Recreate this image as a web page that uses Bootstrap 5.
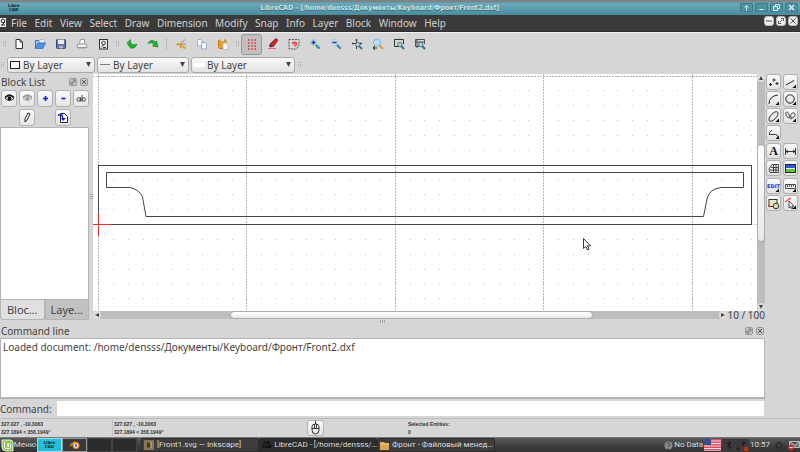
<!DOCTYPE html>
<html lang="en">
<head>
<meta charset="utf-8">
<meta name="viewport" content="width=device-width, initial-scale=1">
<title>LibreCAD - [/home/densss/Документы/Keyboard/Фронт/Front2.dxf]</title>
<link href="https://cdn.jsdelivr.net/npm/bootstrap@5.3.0/dist/css/bootstrap.min.css" rel="stylesheet">
<style>
  body { background: #d6d6d6; color: #444; font: 10px/14px "Noto Sans", "Open Sans", sans-serif; }
  svg { display: block; flex: none; }
  button { padding: 0; border: 0; background: none; color: inherit; font: inherit; display: flex; align-items: center; justify-content: center; flex: none; }
  .titlebar { height: 15px; padding-right: 2px; background: linear-gradient(#7b8589 0 2px, #68a9b9 3px, #5a9dae 60%, #478b9d); }
  .titlebar h1 { font: bold 7px/16px "DejaVu Sans Condensed", "DejaVu Sans", sans-serif; color: #d3e4e8; text-shadow: 0 1px 0 #2c6573; margin: 0; }
  .win-group { gap: 2px; }
  .winbtn { width: 13px; height: 9px; background: #4d91a2; border: 1px solid #3b7b8b; border-radius: 1px; color: #e4f0f3; }
  .menubar { height: 17px; background: #3a3a3a; border-bottom: 1px solid #2e2e2e; }
  .menubar a { color: #d0d0d0; text-decoration: none; line-height: 16px; }
  .menus { width: 435px; }
  .mdi-group { gap: 2px; padding: 1px 2px 0 0; }
  .mdibtn { width: 10px; height: 10px; background: #eee; border: 1px solid #bbb; border-radius: 3px; color: #555; }
  .tools { height: 23px; border-top: 1px solid #f2f2f2; }
  .tool { width: 21px; height: 21px; border-radius: 3px; }
  .tool.pressed { background: #c0c0c0; border: 1px solid #989898; }
  .grip { width: 8px; flex: none; display: flex; justify-content: center; color: #aaa; }
  .grip.thin { width: 4px; }
  .split-rule { width: 1px; height: 12px; background: #bbb; margin: 0 3px; }
  .combos { height: 19px; gap: 2px; }
  .combos .grip { width: 5px; }
  .combo { height: 16px; border: 1px solid #a9a9a9; border-radius: 3px; background: linear-gradient(#fafafa, #e2e2e2); padding: 0 3px 0 2px; gap: 2px; }
  .combo select { appearance: none; border: 0; background: none; font: inherit; color: inherit; padding: 0; min-width: 0; outline: 0; }
  .w-pen { width: 88px; } .w-line { width: 92px; } .w-style { width: 104px; }
  .dock { width: 89px; flex: none; }
  .dock-title { height: 16px; gap: 3px; padding: 0 1px; }
  .dock-title.low { height: 14px; }
  .raised { height: 17px; border: 1px solid #b2b2b2; border-radius: 3px; background: linear-gradient(#fbfbfb, #e4e4e4); }
  .dock-btns { display: grid; grid-template-columns: repeat(5, 16px); column-gap: 2px; row-gap: 2px; padding: 0 1px 1px; }
  .well { background: #fff; border: 1px solid #b4b4b4; }
  .tab { height: 20px; border: 1px solid #b4b4b4; border-top: 0; background: #c2c2c2; font-size: 11px; flex: 1 1 0; }
  .tab.current { background: #e0e0e0; border-radius: 0 0 3px 3px; }
  .splitter { width: 4px; flex: none; color: #a5a5a5; }
  .sheet { background: #fff; overflow: hidden; }
  .sheet > svg { width: 100%; height: 100%; position: absolute; inset: 0; }
  .vbar { width: 8px; flex: none; background: #bdbdbd; border-radius: 4px; }
  .hbar { height: 8px; background: #bdbdbd; border-radius: 4px; }
  .thumb { background: linear-gradient(#fff, #e9e9e9); border: 1px solid #aaa; border-radius: 4px; }
  .barbtn { width: 8px; height: 8px; background: #dedede; border-radius: 4px; color: #444; }
  .v-before { flex: 61 0 0; } .v-thumb { flex: 95 0 0; } .v-after { flex: 60 0 0; }
  .h-before { flex: 129 0 0; } .h-thumb { flex: 362 0 0; } .h-after { flex: 127 0 0; }
  .counter { line-height: 12px; margin: -2px 0; }
  .scroll-row { margin-bottom: 1px; }
  .log { height: 61px; padding: 1px 2px; border-width: 1px 1px 2px 1px; }
  .cmd { padding: 2px 1px 2px 0; }
  .cmd label { padding-right: 5px; }
  .cmd input { border: 0; background: #fff; height: 15px; font: inherit; min-width: 0; outline: 0; }
  .palette { width: 35px; flex: none; padding: 0 1px; }
  .pal-group { display: grid; grid-template-columns: 15px 15px; gap: 1px 2px; margin-bottom: 2px; }
  .pal-group button { height: 16px; border: 1px solid #b0b0b0; border-radius: 3px; background: linear-gradient(#fafafa, #e2e2e2); }
  .glyph-a { font: bold 12px/14px "Liberation Serif", serif; color: #111; }
  .glyph-edit { font: bold 5px/8px "DejaVu Sans", sans-serif; color: #1a1af0; }
  .status { height: 19px; border-top: 1px solid #bcbcbc; font: bold 5px/8px "Liberation Sans", sans-serif; color: #333; }
  .coord { width: 112px; flex: none; padding-left: 1px; }
  .coord-rel { width: 195px; flex: none; border-left: 1px solid #c4c4c4; padding-left: 1px; }
  .mouse { width: 17px; height: 16px; }
  .selected { margin-left: 84px; }
  .taskbar { height: 15px; background: linear-gradient(#5a5a5a, #3c3c3c 60%, #333); color: #dcdcdc; font: 8px/14px Roboto, "Noto Sans", sans-serif; border-top: 1px solid #777; }
  .menu-btn { width: 37px; }
  .tile { width: 25px; height: 14px; background: #2b2b2b; border: 1px solid #444; }
  .tile.cyan { background: #21bfd8; border-color: #9fdce6; }
  .tile.lit { border-color: #999; background: #383838; }
  .task { width: 118px; height: 14px; background: #3d3d3d; border: 1px solid #2c2c2c; border-radius: 2px; padding: 0 2px; justify-content: flex-start; gap: 3px; white-space: nowrap; }
  .task.active { background: #2d2d2d; }
  .tray { gap: 1px; }
  .lc { font: bold 4px/4px "DejaVu Sans", sans-serif; color: #0b2228; text-align: center; }
</style>
<script src="https://cdn.jsdelivr.net/npm/bootstrap@5.3.0/dist/js/bootstrap.bundle.min.js"></script>
</head>
<body class="d-flex flex-column vh-100 overflow-hidden">

<svg width="0" height="0" class="position-absolute" aria-hidden="true">
  <defs>
    <symbol id="grip" viewBox="0 0 3 6"><path d="M0 0h1v1H0zM2 0h1v1H2zM0 2h1v1H0zM2 2h1v1H2zM0 4h1v1H0zM2 4h1v1H2z" fill="currentColor"/></symbol>
    <symbol id="float" viewBox="0 0 8 8"><rect x=".5" y=".5" width="7" height="7" rx="1.500" fill="#c8c8c8" stroke="#999"/><path d="M3.500 2h2.500v2.500M2 3.500v2.500h2.500M3 5l2-2" fill="none" stroke="#666" stroke-width=".9"/></symbol>
    <symbol id="shut" viewBox="0 0 8 8"><rect x=".5" y=".5" width="7" height="7" rx="1.500" fill="#c8c8c8" stroke="#999"/><path d="M2 2l4 4M6 2l-4 4" stroke="#555"/></symbol>
    <symbol id="lens" viewBox="0 0 12 12"><path d="M6.500 6.500l4 4" stroke="#167a94" stroke-width="2.200"/><path d="M7 6.500l4 4" stroke="#49b9d2" stroke-width=".8"/><circle cx="4.500" cy="4.500" r="3.300" fill="#bfe0f0" stroke="#b4c6cc" stroke-width=".8"/></symbol>
    <symbol id="minilens" viewBox="0 0 12 12"><path d="M8 8l3 3" stroke="#167a94" stroke-width="1.800"/><circle cx="6.800" cy="6.500" r="2.200" fill="#a9d9e0" stroke="#456" stroke-width=".8"/></symbol>
    <symbol id="corner" viewBox="0 0 13 13"><path d="M12 8.500V12H8.500z" fill="#000"/></symbol>
  </defs>
</svg>

<header class="titlebar d-flex align-items-center">
  <div class="lc ms-2">Libre<br>CAD</div>
  <h1 class="flex-fill text-center">LibreCAD - [/home/densss/Документы/Keyboard/Фронт/Front2.dxf]</h1>
  <div class="win-group d-flex">
    <button class="winbtn" aria-label="Shade"><svg width="7" height="7"><path d="M3.500 6.500V2M1.500 3.500l2-2 2 2" stroke="currentColor" fill="none"/></svg></button>
    <button class="winbtn" aria-label="Minimize"><svg width="7" height="7"><path d="M1.500 5.500h4" stroke="currentColor"/></svg></button>
    <button class="winbtn" aria-label="Restore"><svg width="7" height="7"><path d="M2.500 2.500v-2h4v4h-2M.5 2.500h4v4h-4z" stroke="currentColor" fill="none"/></svg></button>
    <button class="winbtn" aria-label="Close"><svg width="7" height="7"><path d="M1 1l5 5M6 1L1 6" stroke="currentColor" stroke-width="1.300"/></svg></button>
  </div>
</header>

<nav class="menubar d-flex align-items-start" aria-label="Main menu">
  <svg width="7" height="15" class="me-1"><rect y="3" width="6" height="9" fill="#eee"/><circle cx="3" cy="6" r="1.800" fill="none" stroke="#222"/><path d="M1 10h4M5 7l-3 3" stroke="#222"/></svg>
  <div class="menus d-flex justify-content-between">
    <a href="#">File</a><a href="#">Edit</a><a href="#">View</a><a href="#">Select</a><a href="#">Draw</a><a href="#">Dimension</a><a href="#">Modify</a><a href="#">Snap</a><a href="#">Info</a><a href="#">Layer</a><a href="#">Block</a><a href="#">Window</a><a href="#">Help</a>
  </div>
  <div class="mdi-group d-flex ms-auto">
    <button class="mdibtn" aria-label="Minimize document"><svg width="6" height="6"><path d="M0 3h6" stroke="currentColor"/></svg></button>
    <button class="mdibtn" aria-label="Restore document"><svg width="6" height="6"><path d="M3 .5h2.500V3M.5 3v2.500H3M2 4l2-2" fill="none" stroke="currentColor"/></svg></button>
    <button class="mdibtn" aria-label="Close document"><svg width="6" height="6"><path d="M.5.5l5 5M5.500.5l-5 5" stroke="currentColor"/></svg></button>
  </div>
</nav>

<div class="tools d-flex align-items-center" role="toolbar" aria-label="File, edit and view">
  <span class="grip"><svg width="3" height="6"><use href="#grip"/></svg></span>
  <button class="tool" aria-label="New"><svg width="12" height="12"><path d="M3 1.500h4l2.500 2.500v6.500H3z" fill="#fff" stroke="#333"/><path d="M7 1.500V4h2.500" fill="none" stroke="#333"/></svg></button>
  <button class="tool" aria-label="Open"><svg width="12" height="12"><path d="M1.500 10V2.500h3l1 1H9V5" fill="#9cc5ee" stroke="#2f6fc0"/><path d="M6 1.500h4L11 5H5z" fill="#eef" stroke="#99b" stroke-width=".6"/><path d="M1.500 10.500L4 5h7.500L9 10.500z" fill="#4d94e6" stroke="#2a68bd" stroke-width=".7"/></svg></button>
  <button class="tool" aria-label="Save"><svg width="12" height="12"><rect x="1.500" y="1.500" width="9" height="9" rx="1" fill="#5f78ad" stroke="#2e4479"/><path d="M3 1.500h6V6H3z" fill="#e6ebf4"/><path d="M4 8h4v2.500H4z" fill="#bbb"/></svg></button>
  <button class="tool" aria-label="Print"><svg width="12" height="12"><path d="M3.500 5L4.500 1.500h4V5" fill="#fff" stroke="#999"/><path d="M1.500 6h9l.5 3.500H1z" fill="#eee" stroke="#999"/><path d="M2 10.500h8" stroke="#bbb"/></svg></button>
  <button class="tool" aria-label="Print preview"><svg width="12" height="12"><rect x="2.500" y="1.500" width="8" height="9.500" fill="#f4f4f4" stroke="#333"/><circle cx="6.500" cy="5" r="1.800" fill="none" stroke="#333"/><path d="M7.500 6L4 9.500M6 9.500h3" stroke="#333"/></svg></button>
  <span class="grip"><svg width="3" height="6"><use href="#grip"/></svg></span>
  <button class="tool" aria-label="Undo"><svg width="12" height="12"><path d="M1 5l3.500-3.500v2c.5 3 3 4 6.500 2.500-1.500 4-4 5-7 3.500L1 5z" fill="#1fb32b" stroke="#0d7c17" stroke-width=".6"/></svg></button>
  <button class="tool" aria-label="Redo"><svg width="12" height="12"><path d="M1 5.500c2-4 5-4 7-1.500l1.500-1 1.500 6-5.500-1 1.500-1.500C5.500 4.500 3 4.500 1 5.500z" fill="#1fb32b" stroke="#0d7c17" stroke-width=".6"/></svg></button>
  <span class="split-rule"></span>
  <button class="tool" aria-label="Cut"><svg width="12" height="12"><path d="M5 7l5-5.500M6 6.500L11 6" stroke="#aaa" stroke-width="1.300"/><path d="M1.500 6.500l4-.5 1 2-1.500 2M8 8.500l2 2" fill="none" stroke="#e0951d" stroke-width="2"/></svg></button>
  <button class="tool" aria-label="Copy"><svg width="12" height="12"><path d="M1.500 1.500H5L6.500 3v5h-5z" fill="#f5f7fd" stroke="#a5afcb"/><path d="M5.500 4.500H9L10.500 6v5h-5z" fill="#f5f7fd" stroke="#99a5c8"/></svg></button>
  <button class="tool" aria-label="Paste"><svg width="12" height="12"><rect x="1.500" y="2" width="7.500" height="8.500" rx="1" fill="#e8a12a" stroke="#c27e10"/><path d="M3.500 1h3.500v2H3.500z" fill="#ddd"/><path d="M6 5h3l2 2v4.500H6z" fill="#f7f8fc" stroke="#a8aebe" stroke-width=".7"/></svg></button>
  <span class="grip"><svg width="3" height="6"><use href="#grip"/></svg></span>
  <button class="tool pressed" aria-label="Grid" aria-pressed="true"><svg width="12" height="12"><path d="M2 2h8M2 5h8M2 8h8M2 11h8" stroke="#f02828" stroke-dasharray="1.500 1.750" stroke-width="1.500"/></svg></button>
  <button class="tool" aria-label="Draft"><svg width="12" height="12"><path d="M3 6l6-5.500 2 1.500-4.500 6.500-3 .5z" fill="#d42222" stroke="#7d1010" stroke-width=".7"/><path d="M1 10.500h8" stroke="#e66"/><path d="M3 6l-1 3 3-.5" fill="#333"/></svg></button>
  <button class="tool" aria-label="Redraw"><svg width="12" height="12"><path d="M1 1.500h10V8l-3 3H1z" fill="none" stroke="#555" stroke-dasharray="2 1"/><path d="M4.500 6a2 2 0 1 1 2 2.200" fill="none" stroke="#e33" stroke-width="1.200"/><circle cx="6.500" cy="6" r=".9" fill="#e33"/></svg></button>
  <button class="tool" aria-label="Zoom in"><svg width="12" height="12"><use href="#lens"/><path d="M2.500 4.500h4M4.500 2.500v4" stroke="#123a9c" stroke-width="1.500"/></svg></button>
  <button class="tool" aria-label="Zoom out"><svg width="12" height="12"><use href="#lens"/><path d="M2.500 4.500h4" stroke="#123a9c" stroke-width="1.500"/></svg></button>
  <button class="tool" aria-label="Auto zoom"><svg width="12" height="12"><path d="M5.500 1v10M1 5.500h10M4.500 2h2M2 4.500v2M10 4.500v2" stroke="#333" stroke-width=".9"/><use href="#minilens"/></svg></button>
  <button class="tool" aria-label="Previous view"><svg width="12" height="12"><path d="M7 7l4 4" stroke="#d09a4a" stroke-width="2"/><circle cx="5" cy="4.500" r="3.600" fill="#b9defa" stroke="#7fb2df"/><path d="M1 10h4M3 8l-2 2 2 2" stroke="#222" fill="none"/></svg></button>
  <button class="tool" aria-label="Zoom window"><svg width="12" height="12"><path d="M6 8.500H1.500v-7h9V6" fill="none" stroke="#333"/><use href="#minilens"/></svg></button>
  <button class="tool" aria-label="Zoom panning"><svg width="12" height="12"><path d="M5 8.500H1.500v-7h9V6M1.500 4h9M3 1v9" fill="none" stroke="#444" stroke-width=".9"/><use href="#minilens"/></svg></button>
</div>

<div class="combos d-flex align-items-center" role="toolbar" aria-label="Pen">
  <span class="grip"><svg width="3" height="6"><use href="#grip"/></svg></span>
  <div class="combo w-pen d-flex align-items-center">
    <svg width="11" height="8"><rect x=".5" y=".5" width="9" height="7" fill="#fff" stroke="#222"/></svg>
    <select class="flex-fill" aria-label="Pen colour"><option>By Layer</option></select>
    <svg width="5" height="5"><path d="M0 0h5L2.500 5z" fill="#444"/></svg>
  </div>
  <div class="combo w-line d-flex align-items-center">
    <svg width="11" height="8"><path d="M0 3.500h10" stroke="#777"/></svg>
    <select class="flex-fill" aria-label="Line width"><option>By Layer</option></select>
    <svg width="5" height="5"><path d="M0 0h5L2.500 5z" fill="#444"/></svg>
  </div>
  <div class="combo w-style d-flex align-items-center">
    <svg width="11" height="8"><path d="M0 2h10v4H0z" fill="#fff"/></svg>
    <select class="flex-fill" aria-label="Line type"><option>By Layer</option></select>
    <svg width="5" height="5"><path d="M0 0h5L2.500 5z" fill="#444"/></svg>
  </div>
  <span class="grip"><svg width="3" height="6"><use href="#grip"/></svg></span>
</div>

<main class="d-flex flex-fill">
  <div class="d-flex flex-column flex-fill">
    <div class="d-flex flex-fill">

      <section class="dock d-flex flex-column" aria-label="Block List">
        <div class="dock-title d-flex align-items-center">
          <span class="flex-fill">Block List</span>
          <button aria-label="Float"><svg width="8" height="8"><use href="#float"/></svg></button>
          <button aria-label="Close"><svg width="8" height="8"><use href="#shut"/></svg></button>
        </div>
        <div class="dock-btns">
          <button class="raised" aria-label="Show all"><svg width="11" height="9"><path d="M1 4.500q4.500-5 9 0-4.500 4-9 0z" fill="#fff" stroke="#111" stroke-width=".8"/><path d="M1 3.500q4.500-5 9 0" fill="none" stroke="#111" stroke-width="1.300"/><circle cx="5.500" cy="4.500" r="2" fill="#111"/></svg></button>
          <button class="raised" aria-label="Hide all"><svg width="11" height="9"><path d="M1 4.500q4.500-5 9 0-4.500 4-9 0z" fill="#ddd" stroke="#aaa"/><path d="M1 3.500q4.500-5 9 0" fill="none" stroke="#999" stroke-width="1.300"/><circle cx="5.500" cy="4.500" r="1.800" fill="#999"/></svg></button>
          <button class="raised" aria-label="Add block"><svg width="9" height="9"><path d="M2 4.500h5M4.500 2v5" stroke="#1414f0" stroke-width="1.600"/></svg></button>
          <button class="raised" aria-label="Remove block"><svg width="9" height="9"><path d="M2.500 4.500h4" stroke="#1414f0" stroke-width="1.600"/></svg></button>
          <button class="raised" aria-label="Rename block"><svg width="10" height="9"><circle cx="2.600" cy="5.500" r="1.700" fill="none" stroke="#333" stroke-width=".9"/><path d="M4.500 3.500v4M6 1v6.500" stroke="#333" stroke-width=".9"/><circle cx="7.800" cy="5.500" r="1.700" fill="none" stroke="#333" stroke-width=".9"/></svg></button>
          <span></span>
          <button class="raised" aria-label="Edit block"><svg width="10" height="11"><path d="M3 7l3-6 2 1-3 6-2 2z" fill="#fff" stroke="#222"/></svg></button>
          <span></span>
          <button class="raised" aria-label="Insert block"><svg width="11" height="11"><path d="M2.500 1.500h4l3 3v6h-7z" fill="#fff" stroke="#222"/><path d="M0 3h4l1 4" stroke="#1414f0" fill="none" stroke-width="1.300"/><path d="M3 6h5L5 9z" fill="#1414f0"/></svg></button>
          <span></span>
        </div>
        <div class="well flex-fill"></div>
        <div class="d-flex">
          <button class="tab current">Bloc…</button>
          <button class="tab">Laye…</button>
        </div>
      </section>

      <div class="splitter d-flex align-items-center justify-content-center"><svg width="3" height="6"><path d="M0 .5h3M0 2.500h3M0 4.500h3" stroke="currentColor"/></svg></div>

      <div class="d-flex flex-column flex-fill">
        <div class="d-flex flex-fill">
          <div class="sheet flex-fill position-relative">
            <svg role="img" aria-label="Front panel drawing">
              <path id="dots" fill="#c6c6c6"/>
              <g stroke="#b8b8b8" stroke-dasharray="2 1" fill="none">
                <path d="M5.500 0V400M153.500 0V400M302.500 0V400M450.500 0V400M599.500 0V400"/>
                <path d="M0 2.500H2000"/><path d="M660 150.500H2000" stroke="#ccc"/>
              </g>
              <g stroke="#444" fill="none">
                <rect x="5.500" y="91.500" width="653" height="59"/>
                <path d="M13.500 98.500H650.500V113.500H628Q616 115 614 125L610.500 142.500H53L49.500 123Q47 116 37 113.500H13.500z"/>
              </g>
              <path d="M0 150.500H18M5.500 139V162" stroke="#ff2a2a"/>
              <path d="M490.500 164.500v10l2.300-2 1.700 3.500 1.600-.8-1.600-3.400h3z" fill="#fff" stroke="#222" stroke-width=".9"/>
            </svg>
          </div>
          <div class="vbar d-flex flex-column">
            <button class="barbtn" aria-label="Scroll up"><svg width="4" height="4"><path d="M0 4h4L2 0z" fill="currentColor"/></svg></button>
            <span class="v-before"></span><span class="thumb v-thumb"></span><span class="v-after"></span>
            <button class="barbtn" aria-label="Scroll down"><svg width="4" height="4"><path d="M0 0h4L2 4z" fill="currentColor"/></svg></button>
          </div>
        </div>
        <div class="scroll-row d-flex">
          <div class="hbar d-flex flex-fill">
            <button class="barbtn" aria-label="Scroll left"><svg width="4" height="4"><path d="M4 0v4L0 2z" fill="currentColor"/></svg></button>
            <span class="h-before"></span><span class="thumb h-thumb"></span><span class="h-after"></span>
            <button class="barbtn" aria-label="Scroll right"><svg width="4" height="4"><path d="M0 0v4l4-2z" fill="currentColor"/></svg></button>
          </div>
          <div class="counter position-relative">10 / 100</div>
        </div>
      </div>
    </div>

    <section aria-label="Command line">
      <div class="d-flex justify-content-center"><svg width="6" height="4"><path d="M.5 0v3M2.500 0v3M4.500 0v3" stroke="#aaa"/></svg></div>
      <div class="dock-title low d-flex align-items-center">
        <span class="flex-fill">Command line</span>
        <button aria-label="Float"><svg width="8" height="8"><use href="#float"/></svg></button>
        <button aria-label="Close"><svg width="8" height="8"><use href="#shut"/></svg></button>
      </div>
      <div class="well log">Loaded document: /home/densss/Документы/Keyboard/Фронт/Front2.dxf</div>
      <div class="cmd d-flex align-items-center">
        <label for="command">Command:</label>
        <input id="command" type="text" class="flex-fill">
      </div>
    </section>
  </div>

  <aside class="palette" aria-label="Drawing tools">
    <div class="pal-group">
      <button aria-label="Points"><svg width="13" height="13"><path d="M2 8.500h3M3.500 7v3M5.500 4h3M7 2.500v3M8.500 7.500h3M10 6v3" stroke="#222"/></svg></button>
      <button aria-label="Lines"><svg width="13" height="13"><path d="M2 9l8-4.500" stroke="#222"/><use href="#corner"/></svg></button>
      <button aria-label="Arcs"><svg width="13" height="13"><path d="M2 11Q2 3 11 2" stroke="#222" fill="none"/><use href="#corner"/></svg></button>
      <button aria-label="Circles"><svg width="13" height="13"><circle cx="6" cy="6" r="4.200" stroke="#222" fill="none"/><use href="#corner"/></svg></button>
      <button aria-label="Ellipses"><svg width="13" height="13"><ellipse cx="6.500" cy="6.500" rx="6" ry="2.800" transform="rotate(-48 6.500 6.500)" stroke="#222" stroke-width=".9" fill="none"/><use href="#corner"/></svg></button>
      <button aria-label="Splines"><svg width="13" height="13"><path d="M5 8C1 6 1 2 3 2s2 4 3 6 2 1 1-1 1-5 3-4 1 4-2 5" stroke="#222" stroke-width=".9" fill="none"/><use href="#corner"/></svg></button>
      <button aria-label="Polylines"><svg width="13" height="13"><path d="M5 3L2.500 5.500v2h6q2 0 2 2" stroke="#222" stroke-width=".9" fill="none"/><use href="#corner"/></svg></button>
    </div>
    <div class="pal-group">
      <button aria-label="Text"><span class="glyph-a">A</span></button>
      <button aria-label="Dimensions"><svg width="13" height="13"><path d="M1.500 3v7M11.500 3v7M2 6.500h9M4 5L2 6.500 4 8M9 5l2 1.500L9 8" stroke="#222" stroke-width=".9" fill="none"/></svg></button>
      <button aria-label="Hatch"><svg width="13" height="13"><path d="M3 10.500L2 7l3-4.500h6.500v8zM3 8h8M4 5.500h7M6.500 3v7M9 3v7" stroke="#222" stroke-width=".8" fill="none"/></svg></button>
      <button aria-label="Image"><svg width="13" height="13"><rect x="1.500" y="2.500" width="10" height="8" fill="#3355e8" stroke="#222"/><path d="M2 6.500h9V10H2z" fill="#62c832"/><path d="M2 6.500h9" stroke="#dfe"/></svg></button>
    </div>
    <div class="pal-group">
      <button aria-label="Edit" class="position-relative"><span class="glyph-edit">EDIT</span><svg width="13" height="13" class="position-absolute"><use href="#corner"/></svg></button>
      <button aria-label="Measure"><svg width="13" height="13"><path d="M1.500 4.500h10v4h-10zM3.500 5v2M5.500 5v1.500M7.500 5v2M9.500 5v1.500" stroke="#222" stroke-width=".8" fill="none"/><use href="#corner"/></svg></button>
      <button aria-label="Block"><svg width="13" height="13"><rect x="2" y="2.500" width="8" height="7" fill="#eee9c4" stroke="#333"/><circle cx="9" cy="9" r="2.800" fill="#d9dcb0" stroke="#333"/><path d="M1 9h2" stroke="#f33" stroke-width="2"/></svg></button>
      <button aria-label="Select"><svg width="13" height="13"><path d="M1 5l6-4" stroke="#f33" stroke-width="1.200"/><path d="M5 4v7l1.800-1.500L8 12l1-.6-1-2.200h2z" fill="#fff" stroke="#222" stroke-width=".8"/><use href="#corner"/></svg></button>
    </div>
  </aside>
</main>

<footer class="status d-flex align-items-center">
  <div class="coord">327.027 , -10.3063<br>327.1894 &lt; 358.1949°</div>
  <div class="coord-rel">327.027 , -10.3063<br>327.1894 &lt; 358.1949°</div>
  <button class="raised mouse" aria-label="Mouse hints"><svg width="11" height="14"><path d="M5.500 0v3M2 5.500q0-2.500 3.500-2.500T9 5.500V9q0 4-3.500 4T2 9zM2 7.500h7M4.500 3v4M6.500 3v4" fill="none" stroke="#222" stroke-width=".9"/></svg></button>
  <div class="selected">Selected Entities:<br>0</div>
</footer>

<div class="taskbar d-flex align-items-center">
  <button class="menu-btn"><svg width="13" height="13"><path d="M1 1h8q3 0 3 3v8H5q-4 0-4-4z" fill="#8fc84e" stroke="#e6f2da"/><path d="M3.500 3v5q0 1.500 1.500 1.500h3.500q1 0 1-1V5.500q0-1-1-1t-1 1V8M7 8V5.500q0-1-1-1" fill="none" stroke="#fff"/></svg><span>Меню</span></button>
  <button class="tile cyan" aria-label="LibreCAD launcher"><span class="lc">Libre<br>CAD</span></button>
  <button class="tile lit" aria-label="Blender"><svg width="12" height="10"><path d="M1 6L6 1.500M2 4h5" stroke="#ef8a1f" stroke-width="1.400"/><circle cx="7" cy="5.500" r="3.500" fill="#ef8a1f"/><circle cx="7" cy="5.500" r="2.200" fill="#fff"/><circle cx="7" cy="5.500" r="1.200" fill="#2459a5"/></svg></button>
  <span class="tile"></span><span class="tile"></span>
  <span class="grip thin"></span>
  <button class="task"><svg width="10" height="10"><rect width="10" height="10" rx="1" fill="#8a7752"/><path d="M3 2v5l2 1 2-2-1-3z" fill="#463a22"/><path d="M7 2v6" stroke="#cdbb90"/></svg>[Front1.svg — Inkscape]</button>
  <button class="task active"><span class="lc text-black">Lib<br>CAD</span>LibreCAD - [/home/densss/…</button>
  <button class="task"><svg width="9" height="9"><path d="M0 1h4l1 1h4v7H0z" fill="#dba84f"/><path d="M0 3h9" stroke="#f1cd86"/></svg>Фронт - Файловый менед…</button>
  <div class="tray d-flex align-items-center ms-auto">
    <svg width="9" height="9"><circle cx="4.500" cy="4.500" r="4" fill="#8b8b8b"/><path d="M3 3.500q0-1.500 1.500-1.500T6 3.500 4.500 5v1M4.500 7v1" stroke="#444" fill="none"/></svg>
    <span>No Data</span>
    <svg width="17" height="12"><rect width="17" height="12" fill="#f3dfe3"/><path d="M0 .8h17M0 3.300h17M0 5.800h17M0 8.300h17M0 10.800h17" stroke="#dd4a63" stroke-width="1.400"/><path d="M0 0h7v6H0z" fill="#33508c"/></svg>
    <svg width="27" height="13"><rect width="27" height="13" fill="#3a3a3a"/><path d="M5 4l4 4-2 2V2l2 2-4 4" stroke="#1c1c1c" fill="none"/><path d="M15 11l2-2M20 6l3-3" stroke="#222" stroke-width="2.500"/><path d="M22 8h4v4h-4z" fill="#d42a12"/></svg>
    <span>10:57</span>
    <svg width="8" height="8" class="mx-1"><path d="M2.500 1.500a3 3 0 1 0 3 0M4 0v4" stroke="#1d1d1d" fill="none"/></svg>
    <svg width="12" height="11"><path d="M1.500 1.500h10v6h-10zM2 2l4.500 3L11 2" fill="#777" stroke="#bbb"/><circle cx="3" cy="7.500" r="2.700" fill="#dc2f2f"/><path d="M1.500 7.500h3" stroke="#fff"/></svg>
  </div>
</div>

<script>
  // Grid points: a tenth of the meta grid, measured from the drawing's origin.
  const step = 14.84, ox = 5.5, oy = 150.5;
  let d = "";
  for (let i = -1; i < 140; i++)
    for (let j = -12; j < 60; j++)
      d += `M${Math.floor(ox + i * step)} ${Math.floor(oy + j * step)}h1v1h-1z`;
  document.getElementById("dots").setAttribute("d", d);
</script>
</body>
</html>
